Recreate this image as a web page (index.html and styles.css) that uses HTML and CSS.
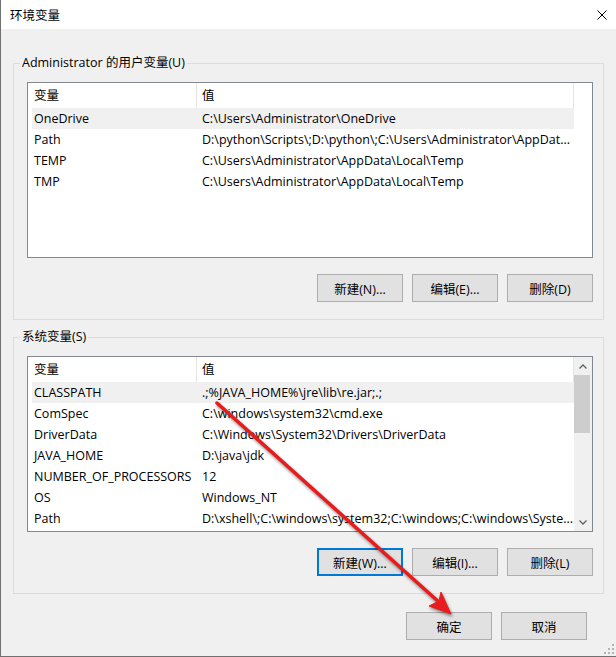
FILE: index.html
```html
<!DOCTYPE html>
<html lang="zh-CN">
<head>
    <meta charset="UTF-8">
    <title>环境变量</title>
    <link rel="stylesheet" href="styles.css">
</head>
<body>

<div class="window">
    <div class="titlebar">
        <span class="title">环境变量</span>
        <svg class="close" width="10" height="10" viewBox="0 0 10 10">
            <path d="M0.5 0.5 L9.5 9.5 M9.5 0.5 L0.5 9.5" stroke="#000" stroke-width="1" fill="none"/>
        </svg>
    </div>

    <div class="content">
        <fieldset class="group">
            <legend>Administrator 的用户变量(U)</legend>
            <div class="group-body">
                <div class="listview">
                    <div class="list-main">
                        <div class="list-header">
                            <div class="hcell name">变量</div>
                            <div class="hcell value">值</div>
                        </div>
                        <div class="row selected"><span class="cell name">OneDrive</span><span class="cell value">C:\Users\Administrator\OneDrive</span></div>
                        <div class="row"><span class="cell name">Path</span><span class="cell value">D:\python\Scripts\;D:\python\;C:\Users\Administrator\AppDat...</span></div>
                        <div class="row"><span class="cell name">TEMP</span><span class="cell value">C:\Users\Administrator\AppData\Local\Temp</span></div>
                        <div class="row"><span class="cell name">TMP</span><span class="cell value">C:\Users\Administrator\AppData\Local\Temp</span></div>
                    </div>
                    <div class="list-side"></div>
                </div>
                <div class="btn-row">
                    <button class="btn">新建(N)...</button>
                    <button class="btn">编辑(E)...</button>
                    <button class="btn">删除(D)</button>
                </div>
            </div>
        </fieldset>

        <fieldset class="group second">
            <legend>系统变量(S)</legend>
            <div class="group-body">
                <div class="listview">
                    <div class="list-main">
                        <div class="list-header">
                            <div class="hcell name">变量</div>
                            <div class="hcell value">值</div>
                        </div>
                        <div class="row selected"><span class="cell name">CLASSPATH</span><span class="cell value">.;%JAVA_HOME%\jre\lib\re.jar;.;</span></div>
                        <div class="row"><span class="cell name">ComSpec</span><span class="cell value">C:\windows\system32\cmd.exe</span></div>
                        <div class="row"><span class="cell name">DriverData</span><span class="cell value">C:\Windows\System32\Drivers\DriverData</span></div>
                        <div class="row"><span class="cell name">JAVA_HOME</span><span class="cell value">D:\java\jdk</span></div>
                        <div class="row"><span class="cell name">NUMBER_OF_PROCESSORS</span><span class="cell value">12</span></div>
                        <div class="row"><span class="cell name">OS</span><span class="cell value">Windows_NT</span></div>
                        <div class="row"><span class="cell name">Path</span><span class="cell value">D:\xshell\;C:\windows\system32;C:\windows;C:\windows\Syste...</span></div>
                    </div>
                    <div class="list-side scrollbar">
                        <div class="sb-arrow">
                            <svg width="8" height="5" viewBox="0 0 8 5"><path d="M0.5 4.5 L4 1 L7.5 4.5" stroke="#606060" stroke-width="1.3" fill="none"/></svg>
                        </div>
                        <div class="sb-thumb"></div>
                        <div class="sb-track"></div>
                        <div class="sb-arrow">
                            <svg width="8" height="5" viewBox="0 0 8 5"><path d="M0.5 0.5 L4 4 L7.5 0.5" stroke="#606060" stroke-width="1.3" fill="none"/></svg>
                        </div>
                    </div>
                </div>
                <div class="btn-row">
                    <button class="btn focused">新建(W)...</button>
                    <button class="btn">编辑(I)...</button>
                    <button class="btn">删除(L)</button>
                </div>
            </div>
        </fieldset>

        <div class="dialog-buttons">
            <button class="btn">确定</button>
            <button class="btn">取消</button>
        </div>
    </div>

    <!-- red annotation arrow drawn over the dialog -->
    <svg class="arrow" width="616" height="657" viewBox="0 0 616 657">
        <g fill="#e81c1c" stroke="#e81c1c">
            <line x1="217" y1="403" x2="440" y2="603" stroke-width="3.5" stroke-linecap="round"/>
            <polygon points="451,614 429,606 439,601 441,592" stroke-width="1" stroke-linejoin="round"/>
        </g>
    </svg>

    <svg class="grip" width="10" height="10" viewBox="0 0 10 10">
        <g fill="#b4b4b4">
            <rect x="8" y="0" width="2" height="2"/>
            <rect x="4" y="4" width="2" height="2"/>
            <rect x="8" y="4" width="2" height="2"/>
            <rect x="0" y="8" width="2" height="2"/>
            <rect x="4" y="8" width="2" height="2"/>
            <rect x="8" y="8" width="2" height="2"/>
        </g>
    </svg>
</div>

</body>
</html>
```

FILE: styles.css
```css
body {
    margin: 0;
    font-family: "Open Sans", "Noto Sans CJK SC", sans-serif;
    font-size: 12.5px;
    color: #000;
    background: #f0f0f0;
}
.window {
    position: relative;
    width: 615px;
    height: 656px;
    border-left: 1px solid #707070;
    border-bottom: 1px solid #707070;
    background: #f0f0f0;
    overflow: hidden;
}
.titlebar {
    height: 29px;
    background: #fff;
    display: flex;
    align-items: center;
    padding-left: 9px;
}
.close {
    margin-left: auto;
    margin-right: 9px;
}
.content {
    padding: 26px 12px 0 12px;
}
.group {
    margin: 0;
    padding: 0;
    min-width: 0;
    border: 1px solid #dcdcdc;
}
.group legend {
    margin-left: 6px;
    padding: 0 2px;
    line-height: 16px;
}
.group.second {
    margin-top: 9px;
}
.group-body {
    padding: 11px 10px 17px 13px;
}
.listview {
    display: flex;
    height: 176px;
    box-sizing: border-box;
    border: 1px solid #828790;
    background: #fff;
}
.list-main {
    flex: 1;
    min-width: 0;
}
.list-side {
    width: 18px;
}
.list-header {
    display: grid;
    grid-template-columns: 169px 1fr;
    height: 25px;
    line-height: 25px;
    border-right: 1px solid #e5e5e5;
}
.hcell.name {
    padding-left: 6px;
    border-right: 1px solid #e5e5e5;
}
.hcell.value {
    padding-left: 5px;
}
.row {
    display: grid;
    grid-template-columns: 164px 1fr;
    height: 21px;
    line-height: 21px;
    margin-left: 4px;
    white-space: nowrap;
}
.row.selected {
    background: #f0f0f0;
}
.cell {
    overflow: hidden;
}
.cell.name {
    padding-left: 2px;
}
.cell.value {
    padding-left: 6px;
}
.scrollbar {
    display: flex;
    flex-direction: column;
    background: #f0f0f0;
}
.sb-arrow {
    height: 18px;
    display: flex;
    align-items: center;
    justify-content: center;
    padding-right: 1px;
}
.sb-thumb {
    height: 58px;
    margin-right: 2px;
    background: #cdcdcd;
}
.sb-track {
    flex: 1;
}
.btn-row {
    display: flex;
    justify-content: flex-end;
    gap: 9px;
    margin-top: 16px;
}
.btn {
    width: 86px;
    height: 28px;
    box-sizing: border-box;
    padding: 0;
    font-family: inherit;
    font-size: 12.5px;
    color: #000;
    background: #e1e1e1;
    border: 1px solid #adadad;
    border-radius: 0;
}
.btn.focused {
    border: 2px solid #0078d7;
}
.dialog-buttons {
    display: flex;
    justify-content: flex-end;
    gap: 9px;
    margin-top: 18px;
    padding-right: 17px;
}
.arrow {
    position: absolute;
    left: -1px;
    top: 0;
    pointer-events: none;
    filter: drop-shadow(1px 2px 1.5px rgba(0, 0, 0, 0.45));
}
.grip {
    position: absolute;
    right: 2px;
    bottom: 2px;
}
```
